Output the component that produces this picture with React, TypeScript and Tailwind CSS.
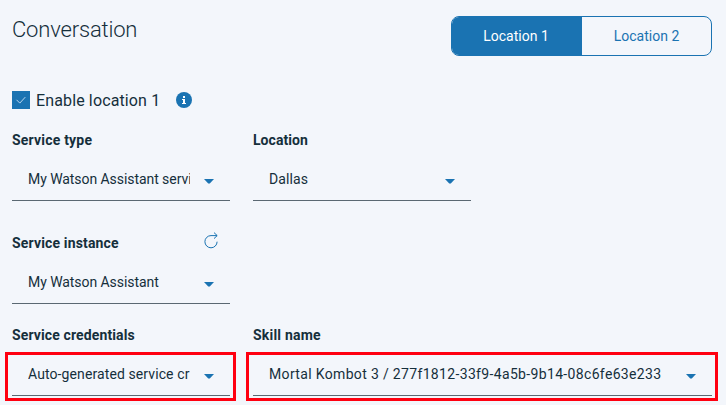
import React from "react";

type FieldProps = {
  label: string;
  labelTracking: string;
  value: string;
  tracking: string;
  wide?: boolean;
  refresh?: boolean;
  outlined?: boolean;
};

function Field({ label, labelTracking, value, tracking, refresh, outlined, wide }: FieldProps) {
  return (
    <div className={wide ? "w-[459px]" : "w-[218px]"}>
      <div className="flex h-5 items-center justify-between pr-3">
        <span className={"whitespace-nowrap text-[14px] font-bold leading-5 " + labelTracking}>{label}</span>
        {refresh && (
          <svg width="14" height="17" viewBox="0 0 14 17" fill="none" stroke="#1a73b2" className="-mt-[5px]">
            <path d="M13 3.6H7A6.1 6.1 0 1 0 13.1 9.7M10 .6L13.2 3.6L10 6.6" />
          </svg>
        )}
      </div>
      <div className="relative mt-2.5 flex h-[41px] items-center justify-between border-b border-[#5a6872] pl-4 pr-4">
        <span className={"-mt-0.5 overflow-hidden whitespace-nowrap text-[14px] leading-5 " + tracking + (wide ? " w-[410px]" : " w-[162px]")}>{value}</span>
        <svg width="10" height="5" viewBox="0 0 10 5" className="mt-0.5 shrink-0 fill-[#1a73b2]"><path d="M0 0h10L5.8 4.5H4.2z" /></svg>
        {outlined && <div className="absolute -bottom-[6px] -left-[7px] -right-[6px] -top-[3px] border-[3px] border-[#ff0010]" />}
      </div>
    </div>
  );
}

export default function App() {
  return (
    <main className="h-[405px] w-[726px] overflow-hidden bg-[#f3f6fb] pl-3 font-[Roboto,sans-serif] text-[#152f3b]">
      <header className="flex h-[90px] justify-between pr-[14px] pt-4">
        <h1 className="text-[22px] font-light leading-7 tracking-[-0.17px]">Conversation</h1>
        <div className="flex h-10 w-[261px] overflow-hidden rounded-lg border border-[#1a73b2] text-[14px]">
          <button className="w-[130px] bg-[#1a73b2] pr-0.5 text-white">Location 1</button>
          <button className="flex-1 text-[#1a73b2]">Location 2</button>
        </div>
      </header>
      <div className="flex h-5 items-center">
        <span className="flex size-[18px] items-center justify-center bg-[#1a73b2]">
          <svg width="12" height="10" fill="none" stroke="#b9d6ee"><path d="M1.5 4.8l3.3 3.3 5.5-6" /></svg>
        </span>
        <span className="ml-1.5 mt-px w-[124px] whitespace-nowrap text-[16px] tracking-[0.13px]">Enable location 1</span>
        <svg width="16" height="16" viewBox="0 0 16 16" className="ml-4">
          <circle cx="8" cy="8" r="8" fill="#1a73b2" />
          <path d="M7 4h2v2H7zM6 7h3v4h1v1H6v-1h1V8H6z" fill="white" />
        </svg>
      </div>
      <div className="mt-5 grid grid-cols-[218px_459px] gap-x-[23px]">
        <Field label="Service type" labelTracking="tracking-[0.2px]" value="My Watson Assistant servi" tracking="tracking-[-0.06px]" />
        <Field label="Location" labelTracking="tracking-[0.05px]" value="Dallas" tracking="tracking-[0.1px]" />
      </div>
      <div className="mt-8">
        <Field label="Service instance" labelTracking="tracking-[0.16px]" value="My Watson Assistant" tracking="tracking-[-0.06px]" refresh />
      </div>
      <div className="mt-[21px] grid grid-cols-[218px_459px] gap-x-[23px]">
        <Field label="Service credentials" labelTracking="tracking-[0.12px]" value="Auto-generated service cr" tracking="tracking-[0.1px]" outlined />
        <Field label="Skill name" labelTracking="tracking-[0.2px]" value="Mortal Kombot 3 / 277f1812-33f9-4a5b-9b14-08c6fe63e233" tracking="tracking-[0.34px]" outlined wide />
      </div>
    </main>
  );
}
